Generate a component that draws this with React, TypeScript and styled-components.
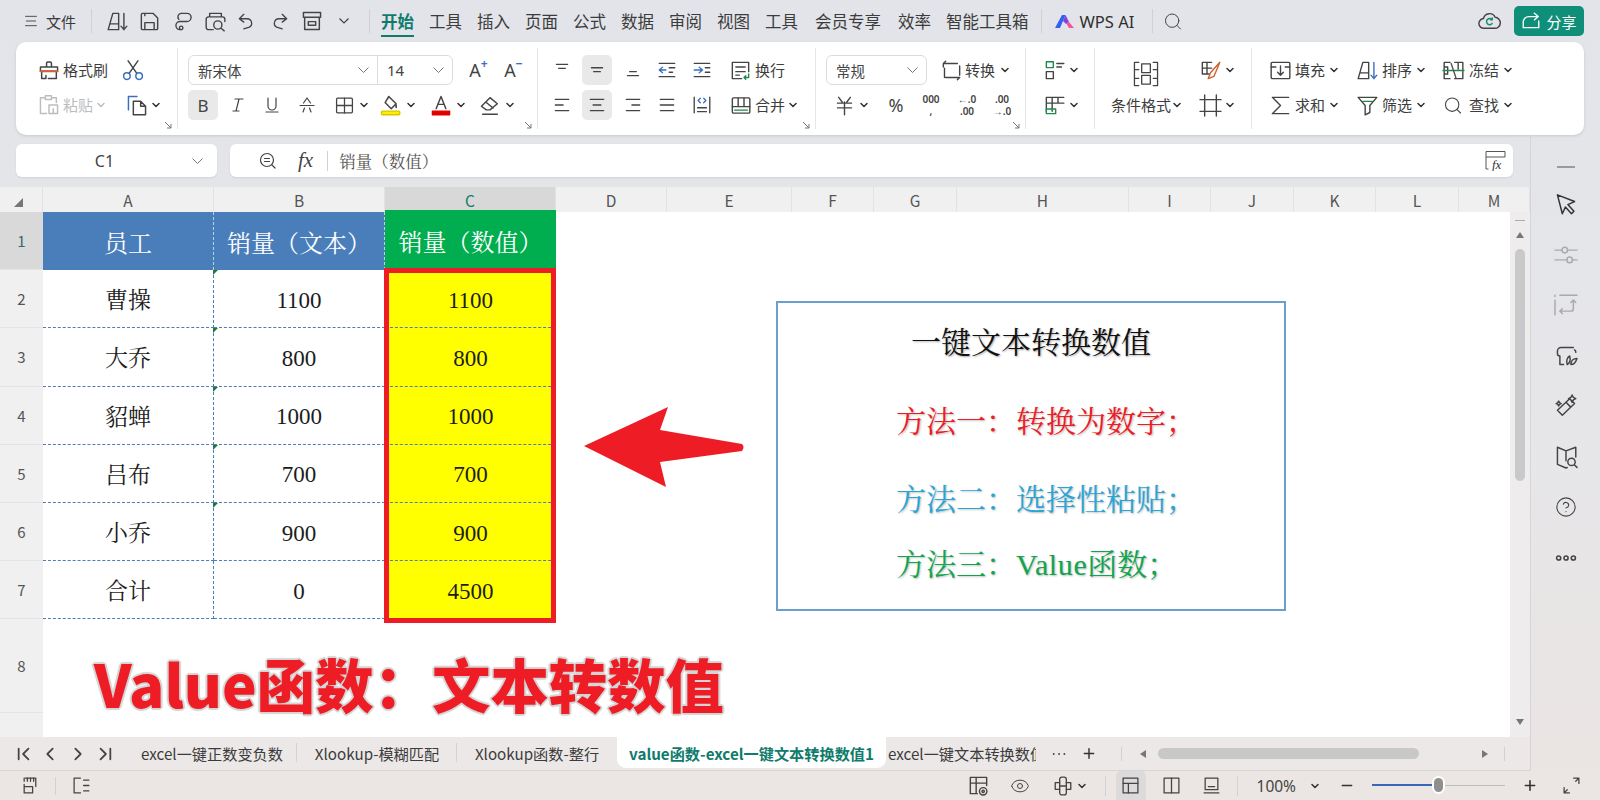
import React from "react";
import styled, { createGlobalStyle } from "styled-components";
import { Search, CircleHelp, Eye, Plus, Minus } from "lucide-react";

const GlobalStyle = createGlobalStyle`
  html, body { margin: 0; padding: 0; height: 100%; overflow: hidden; }
  body { font-family: "Noto Sans", "Noto Sans CJK SC", sans-serif; color: #333; }
`;

const UI_FONT = `"Noto Sans CJK SC", "Noto Sans", sans-serif`;
const SHEET_FONT = `"Liberation Serif", "Noto Serif CJK SC", "Noto Sans CJK SC", serif`;

const Ic = ({ s = 20, c = "#444", w = 1.2, children }: { s?: number; c?: string; w?: number; children: React.ReactNode }) => (
  <svg width={s} height={s} viewBox="1 1 18 18" overflow="visible" fill="none" stroke={c} strokeWidth={w} strokeLinecap="round" strokeLinejoin="round">
    {children}
  </svg>
);

const Chev = ({ c = "#333" }: { c?: string }) => (
  <svg width="8" height="8" viewBox="0 0 8 8" fill="none" stroke={c} strokeWidth="1.5" strokeLinecap="round" strokeLinejoin="round">
    <path d="M1 2.5l3 3 3-3" />
  </svg>
);

const SoftChev = () => (
  <svg width="13" height="8" viewBox="0 0 13 8" fill="none" stroke="#777" strokeWidth="1">
    <path d="M1.5 1.5l5 5 5-5" />
  </svg>
);

const Launcher = () => (
  <svg width="8" height="8" viewBox="0 0 8 8" fill="none" stroke="#777" strokeWidth="1">
    <path d="M1 1l6 6M7 3v4H3" />
  </svg>
);

const Page = styled.div`
  width: 1600px;
  height: 800px;
  display: flex;
  flex-direction: column;
  overflow: hidden;
  background: linear-gradient(180deg, #e2e4e9 0%, #e6e6e9 50%, #ebe5e3 100%);
  font-family: ${UI_FONT};
`;

const TopBar = styled.div`
  height: 42px;
  flex: none;
  display: flex;
  align-items: center;
  padding: 0 16px 0 25px;
`;

const Slot = styled.div<{ $w?: number; $ml?: number }>`
  flex: none;
  width: ${(p) => (p.$w ? `${p.$w}px` : "auto")};
  margin-left: ${(p) => p.$ml ?? 0}px;
  display: flex;
  align-items: center;
  justify-content: center;
`;

const Sep = styled.div<{ $ml?: number; $h?: number }>`
  flex: none;
  width: 1px;
  height: ${(p) => p.$h ?? 24}px;
  margin-left: ${(p) => p.$ml ?? 0}px;
  background: #cfd1d5;
`;

const MenuLabel = styled.span<{ $ml?: number }>`
  margin-left: ${(p) => p.$ml ?? 0}px;
  font-size: 15px;
  color: #3a3a3a;
  white-space: nowrap;
`;

const MenuTab = styled.div<{ $active?: boolean; $ml?: number }>`
  flex: none;
  position: relative;
  margin-left: ${(p) => p.$ml ?? 15}px;
  font-size: 16.5px;
  line-height: 24px;
  color: ${(p) => (p.$active ? "#0f7b6c" : "#3c3c3c")};
  font-weight: ${(p) => (p.$active ? 700 : 400)};
  white-space: nowrap;
  &::after {
    content: "";
    display: ${(p) => (p.$active ? "block" : "none")};
    position: absolute;
    left: 0;
    right: 0;
    bottom: -4px;
    height: 2px;
    background: #0f7b6c;
  }
`;

const AiLabel = styled.span`
  margin-left: 4px;
  font-family: "Noto Sans", sans-serif;
  font-size: 16.5px;
  color: #2f2f2f;
  white-space: nowrap;
`;

const ShareButton = styled.div`
  flex: none;
  width: 70px;
  height: 30px;
  margin-left: 15px;
  border-radius: 5px;
  background: #0f8f7a;
  color: #fff;
  font-size: 15px;
  display: flex;
  align-items: center;
  justify-content: center;
  gap: 5px;
`;

const Spacer = styled.div`
  flex: 1;
`;

const Ribbon = styled.div`
  flex: none;
  height: 93px;
  margin: 0 16px;
  display: flex;
  border-radius: 10px;
  background: #fff;
  box-shadow: 0 1px 3px rgba(0, 0, 0, 0.12);
`;

const Group = styled.div<{ $w?: number; $pl?: number; $last?: boolean }>`
  position: relative;
  flex: ${(p) => (p.$w ? "none" : "1")};
  width: ${(p) => (p.$w ? `${p.$w}px` : "auto")};
  height: 81px;
  margin-top: 6px;
  padding: 7px 0 0 ${(p) => p.$pl ?? 0}px;
  box-sizing: border-box;
  display: flex;
  flex-direction: column;
  gap: 5px;
  border-right: ${(p) => (p.$last ? "none" : "1px solid #e6e6e6")};
`;

const GroupCorner = styled.div`
  position: absolute;
  right: 5px;
  bottom: 0;
  display: flex;
`;

const Row = styled.div`
  height: 30px;
  display: flex;
  align-items: center;
`;

const Label = styled.span<{ $ml?: number; $dim?: boolean }>`
  flex: none;
  margin-left: ${(p) => p.$ml ?? 0}px;
  margin-top: -2px;
  font-size: 15px;
  color: ${(p) => (p.$dim ? "#bdbdbd" : "#3d3d3d")};
  white-space: nowrap;
`;

const Toggle = styled(Slot)<{ $on?: boolean }>`
  height: 30px;
  border-radius: 5px;
  background: ${(p) => (p.$on ? "#e9e9e9" : "transparent")};
`;

const ComboBox = styled.div<{ $w: number }>`
  flex: none;
  width: ${(p) => p.$w}px;
  height: 30px;
  box-sizing: border-box;
  border: 1px solid #dcdcdc;
  border-radius: 6px;
  display: flex;
  align-items: center;
`;

const ComboPart = styled.div<{ $w: number; $divide?: boolean }>`
  flex: none;
  width: ${(p) => p.$w}px;
  height: 100%;
  padding: 0 7px 0 9px;
  box-sizing: border-box;
  display: flex;
  align-items: center;
  justify-content: space-between;
  font-size: 14.5px;
  color: #444;
  border-right: ${(p) => (p.$divide ? "1px solid #dcdcdc" : "none")};
`;

const Glyph = styled.span<{ $size?: number; $weight?: number }>`
  position: relative;
  font-family: "Noto Sans", sans-serif;
  font-size: ${(p) => p.$size ?? 18}px;
  font-weight: ${(p) => p.$weight ?? 400};
  color: #444;
  line-height: 1;
`;

const GlyphMark = styled.sup<{ $c: string }>`
  position: absolute;
  left: 100%;
  top: -3px;
  font-size: 12px;
  line-height: 1;
  font-weight: 700;
  color: ${(p) => p.$c};
`;

const NumberStack = styled.div`
  display: flex;
  flex-direction: column;
  align-items: center;
  font-family: "Noto Sans", sans-serif;
  font-size: 10px;
  font-weight: 600;
  line-height: 12px;
  color: #444;
`;

const BigCondition = styled.div`
  flex: none;
  width: 105px;
  padding-right: 3px;
  box-sizing: border-box;
  display: flex;
  flex-direction: column;
  align-items: center;
`;

const BigIconBox = styled.div`
  height: 32px;
  display: flex;
  align-items: flex-end;
`;

const BigLabelRow = styled.div`
  margin-top: 3px;
  height: 30px;
  display: flex;
  align-items: center;
  gap: 2px;
`;

const SplitGroup = styled.div`
  display: flex;
  height: 100%;
`;

const Column = styled.div`
  display: flex;
  flex-direction: column;
  gap: 5px;
`;

const Main = styled.div`
  flex: 1;
  min-height: 0;
  display: flex;
`;

const LeftPane = styled.div`
  width: 1530px;
  flex: none;
  display: flex;
  flex-direction: column;
`;

const FormulaRow = styled.div`
  flex: none;
  height: 33px;
  margin: 9px 17px 10px 16px;
  display: flex;
  gap: 13px;
`;

const NameBox = styled.div`
  flex: none;
  width: 201px;
  box-sizing: border-box;
  padding: 0 13px 0 0;
  background: #fff;
  border-radius: 6px;
  box-shadow: 0 1px 2px rgba(0, 0, 0, 0.08);
  display: flex;
  align-items: center;
`;

const NameText = styled.span`
  flex: 1;
  text-align: center;
  padding-left: 2px;
  font-family: "Noto Sans", sans-serif;
  font-size: 16px;
  color: #444;
`;

const FormulaBox = styled.div`
  flex: 1;
  background: #fff;
  border-radius: 6px;
  box-shadow: 0 1px 2px rgba(0, 0, 0, 0.08);
  display: flex;
  align-items: center;
  padding: 0 7px 0 29px;
`;

const FxText = styled.span`
  margin-left: 21px;
  font-family: "Liberation Serif", serif;
  font-style: italic;
  font-size: 21px;
  color: #444;
`;

const FormulaText = styled.span`
  margin-left: 11px;
  font-family: ${SHEET_FONT};
  font-size: 16.5px;
  color: #555;
`;

const FxCorner = styled.text`
  font-family: "Liberation Serif", serif;
  font-style: italic;
  font-size: 13px;
  fill: #333;
`;

const Sheet = styled.div`
  position: relative;
  flex: 1;
  min-height: 0;
  display: flex;
  flex-direction: column;
`;

const ColumnHeader = styled.div`
  flex: none;
  height: 25px;
  display: flex;
  background: #f0f0f0;
`;

const ColCell = styled.div<{ $w: number; $on?: boolean }>`
  flex: none;
  width: ${(p) => p.$w}px;
  box-sizing: border-box;
  display: flex;
  align-items: center;
  justify-content: center;
  font-size: 15.5px;
  color: ${(p) => (p.$on ? "#0f7b6c" : "#555")};
  background: ${(p) => (p.$on ? "#d8d8d8" : "#f0f0f0")};
  border-right: 1px solid #e2e2e2;
`;

const CornerMark = styled.i`
  width: 0;
  height: 0;
  margin: 6px 0 0 -6px;
  border-left: 9px solid transparent;
  border-bottom: 9px solid #777;
`;

const SheetBody = styled.div`
  flex: 1;
  min-height: 0;
  display: flex;
`;

const RowHeader = styled.div`
  flex: none;
  width: 43px;
  display: flex;
  flex-direction: column;
  background: #f0f0f0;
`;

const RowCell = styled.div<{ $h: number; $on?: boolean }>`
  flex: none;
  height: ${(p) => p.$h}px;
  box-sizing: border-box;
  display: flex;
  align-items: center;
  justify-content: center;
  font-size: 15px;
  color: ${(p) => (p.$on ? "#2f6f68" : "#555")};
  background: ${(p) => (p.$on ? "#d9d9d9" : "#f0f0f0")};
  border-bottom: 1px solid #e4e4e4;
`;

const GridWrap = styled.div`
  flex: 1;
  min-width: 0;
  background: #fff;
`;

const DataGrid = styled.div`
  position: relative;
  display: grid;
  grid-template-columns: 171px 171px 171px;
  grid-auto-rows: 58.2px;
  width: 513px;
  font-family: ${SHEET_FONT};
  font-size: 23px;
`;

const HeadCell = styled.div<{ $green?: boolean }>`
  display: flex;
  align-items: center;
  justify-content: center;
  font-size: 24px;
  color: #fff;
  white-space: nowrap;
  background: ${(p) => (p.$green ? "#00ad4f" : "#4a7ebb")};
  border-right: ${(p) => (p.$green ? "none" : "1px dashed #b9d2ea")};
  ${(p) => (p.$green ? "margin-top: -2px;" : "")}
`;

const DataCell = styled.div<{ $fill?: boolean; $flag?: boolean; $num?: boolean }>`
  position: relative;
  display: flex;
  align-items: center;
  justify-content: center;
  padding-top: ${(p) => (p.$num ? 4 : 0)}px;
  color: #1c1c1c;
  background: ${(p) => (p.$fill ? "#ffff00" : "#fff")};
  border-bottom: 1px dashed #4a7ebb;
  border-right: ${(p) => (p.$fill ? "none" : "1px dashed #4a7ebb")};
  &::before {
    content: "";
    display: ${(p) => (p.$flag ? "block" : "none")};
    position: absolute;
    left: -1px;
    top: 0;
    border-top: 5px solid #1f7a3a;
    border-right: 5px solid transparent;
  }
`;

const RedFrame = styled.div`
  position: absolute;
  grid-column: 3;
  grid-row: 2 / 8;
  inset: -2px 0 -4px -1px;
  border: 5px solid #ee1c25;
  pointer-events: none;
`;

const ArrowOverlay = styled.div`
  position: absolute;
  left: 583px;
  top: 219px;
  display: flex;
`;

const NoteBox = styled.div`
  position: absolute;
  left: 776px;
  top: 114px;
  width: 510px;
  height: 310px;
  box-sizing: border-box;
  border: 2px solid #6a9fd0;
  background: #fff;
  padding: 20px 0 0 118px;
  font-family: ${SHEET_FONT};
  display: flex;
  flex-direction: column;
`;

const NoteTitle = styled.div`
  margin-left: -118px;
  text-align: center;
  font-size: 30px;
  line-height: 40px;
  color: #111;
  text-shadow: 1px 1px 2px rgba(0, 0, 0, 0.35);
`;

const NoteLine = styled.div<{ $c: string; $mt: number }>`
  margin-top: ${(p) => p.$mt}px;
  font-size: 30px;
  line-height: 40px;
  color: ${(p) => p.$c};
  white-space: nowrap;
  text-shadow: 1px 1px 2px rgba(0, 0, 0, 0.28);
`;

const WideLatin = styled.span`
  letter-spacing: 0.6px;
`;

const Banner = styled.div`
  position: absolute;
  left: 94px;
  top: 461px;
  font-family: "Noto Sans CJK SC", "Noto Sans", sans-serif;
  font-size: 58.4px;
  font-weight: 900;
  line-height: 70px;
  color: #ee1c25;
  white-space: nowrap;
  text-shadow: 2px 0 1px #d4d4d4, -2px 0 1px #d4d4d4, 0 2px 1px #d4d4d4, 0 -2px 1px #d4d4d4, 1px 1px 1px #d4d4d4,
    -1px -1px 1px #d4d4d4, 1px -1px 1px #d4d4d4, -1px 1px 1px #d4d4d4;
`;

const VScroll = styled.div`
  position: absolute;
  right: 0;
  top: 25px;
  bottom: 0;
  width: 20px;
  background: #eeecec;
  display: flex;
  flex-direction: column;
  align-items: center;
`;

const ScrollDash = styled.div`
  width: 10px;
  height: 1px;
  margin-top: 8px;
  background: #aaa;
`;

const ScrollUp = styled.i`
  margin-top: 11px;
  border-left: 4px solid transparent;
  border-right: 4px solid transparent;
  border-bottom: 6px solid #777;
`;

const ScrollThumb = styled.div`
  margin-top: 11px;
  width: 10px;
  height: 232px;
  border-radius: 5px;
  background: #c9c9cb;
`;

const ScrollDown = styled.i`
  margin-top: auto;
  margin-bottom: 12px;
  border-left: 4px solid transparent;
  border-right: 4px solid transparent;
  border-top: 6px solid #777;
`;

const TabBar = styled.div`
  flex: none;
  height: 34px;
  box-sizing: border-box;
  display: flex;
  align-items: flex-start;
  background: #ebe8e7;
  border-bottom: 1px solid #d8d6d5;
`;

const TabStrip = styled.div`
  flex: none;
  height: 33px;
  display: flex;
  align-items: center;
`;

const SheetTab = styled.div<{ $w: number; $on?: boolean; $sep?: boolean; $ml?: number }>`
  flex: none;
  position: relative;
  width: ${(p) => p.$w}px;
  height: 31px;
  margin-left: ${(p) => p.$ml ?? 0}px;
  align-self: flex-start;
  overflow: hidden;
  display: flex;
  align-items: center;
  justify-content: center;
  font-size: 15.2px;
  font-weight: ${(p) => (p.$on ? 700 : 400)};
  color: ${(p) => (p.$on ? "#0f7b6c" : "#3c3c3c")};
  background: ${(p) => (p.$on ? "#fff" : "transparent")};
  border-radius: 0 0 9px 9px;
  white-space: nowrap;
  &::after {
    content: "";
    display: ${(p) => (p.$sep ? "block" : "none")};
    position: absolute;
    right: 0;
    top: 6px;
    height: 20px;
    width: 1px;
    background: #d4d2d1;
  }
`;

const ClipTab = styled(SheetTab)`
  justify-content: flex-start;
  padding-left: 2px;
  box-sizing: border-box;
`;

const HThumb = styled.div`
  flex: none;
  width: 261px;
  height: 11px;
  margin-left: 11px;
  border-radius: 6px;
  background: #c9c8c8;
`;

const StatusBar = styled.div`
  flex: none;
  height: 29px;
  display: flex;
  align-items: center;
  padding: 0 19px 0 21px;
  background: #ebe5e3;
`;

const ViewToggle = styled(Slot)`
  height: 29px;
  border-radius: 5px 5px 0 0;
  background: #dcdada;
`;

const ZoomText = styled.span<{ $ml: number }>`
  flex: none;
  margin-left: ${(p) => p.$ml}px;
  font-family: "Noto Sans", sans-serif;
  font-size: 15.5px;
  color: #444;
`;

const Slider = styled.div`
  position: relative;
  flex: none;
  width: 133px;
  height: 1px;
  margin-left: 17px;
  background: #bdbdbd;
`;

const SliderFill = styled.div`
  position: absolute;
  left: 0;
  top: -1px;
  height: 2px;
  background: #3a68b8;
`;

const SliderKnob = styled.div`
  position: absolute;
  top: -7px;
  width: 9px;
  height: 14px;
  border-radius: 5px;
  background: #8f8f8f;
  box-shadow: 0 0 0 2px #fff;
`;

const SidePanel = styled.div`
  flex: none;
  width: 70px;
  box-sizing: border-box;
  padding-top: 31px;
  border-left: 1px solid #d5d5d7;
  display: flex;
  flex-direction: column;
  align-items: center;
`;

const SideDash = styled.div`
  width: 18px;
  height: 2px;
  margin-bottom: 25px;
  background: #9a9a9a;
`;

const SideItem = styled.div`
  height: 22px;
  margin-bottom: 28.5px;
  display: flex;
  align-items: center;
  justify-content: center;
`;

const columns: [string, number][] = [
  ["A", 171], ["B", 171], ["C", 171], ["D", 111], ["E", 125], ["F", 82], ["G", 83],
  ["H", 172], ["I", 82], ["J", 83], ["K", 82], ["L", 83], ["M", 71],
];

const rowsData: [string, string, string][] = [
  ["曹操", "1100", "1100"],
  ["大乔", "800", "800"],
  ["貂蝉", "1000", "1000"],
  ["吕布", "700", "700"],
  ["小乔", "900", "900"],
  ["合计", "0", "4500"],
];

const rowHeights = [58.2, 58.2, 58.2, 58.2, 58.2, 58.2, 58.2, 94];

function RibbonBar() {
  return (
    <Ribbon>
      <Group $w={162} $pl={22}>
        <Row>
          <Slot $w={22}>
            <Ic s={22}>
              <path d="M8 7V4.5a1 1 0 0 1 1-1h2a1 1 0 0 1 1 1V7M3 7.5h14V11H3zM4 11v6h3.5v-2.5M9.5 17H16v-6" />
              <path d="M3 11h14" stroke="#c8663a" strokeWidth="1.6" />
            </Ic>
          </Slot>
          <Label $ml={3}>格式刷</Label>
          <Slot $w={20} $ml={15}>
            <Ic s={22}>
              <path d="M7 12.5L14 2.5M13 12.5L6 2.5" />
              <circle cx="5" cy="15" r="2.7" stroke="#3a6fc0" />
              <circle cx="15" cy="15" r="2.7" stroke="#3a6fc0" />
            </Ic>
          </Slot>
        </Row>
        <Row>
          <Slot $w={22}>
            <Ic s={22} c="#bdbdbd">
              <path d="M6 4H3v13h5M13 4h3v4M7 2.5h5v3H7zM10 10h7v7h-7zM13.5 13v4" />
            </Ic>
          </Slot>
          <Label $ml={3} $dim>粘贴</Label>
          <Slot $w={8} $ml={4}><Chev c="#bdbdbd" /></Slot>
          <Slot $w={22} $ml={21}>
            <Ic s={22}>
              <path d="M3 14V3h7" stroke="#3a6fc0" />
              <path d="M7 7h6l4 4v7H7zM13 7v4h4" />
            </Ic>
          </Slot>
          <Slot $w={8} $ml={4}><Chev /></Slot>
        </Row>
        <GroupCorner><Launcher /></GroupCorner>
      </Group>

      <Group $w={360} $pl={10}>
        <Row>
          <ComboBox $w={265}>
            <ComboPart $w={189} $divide>新宋体<SoftChev /></ComboPart>
            <ComboPart $w={74}><Glyph $size={15}>14</Glyph><SoftChev /></ComboPart>
          </ComboBox>
          <Slot $w={24} $ml={10}><Glyph>A<GlyphMark $c="#3a6fc0">+</GlyphMark></Glyph></Slot>
          <Slot $w={24} $ml={11}><Glyph>A<GlyphMark $c="#3a6fc0">−</GlyphMark></Glyph></Slot>
        </Row>
        <Row>
          <Toggle $w={30} $on><Glyph $size={17}>B</Glyph></Toggle>
          <Slot $w={40}>
            <Ic s={18}><path d="M7 4h8M11 4L8 16M5 16h6" /></Ic>
          </Slot>
          <Slot $w={28}>
            <Ic s={18}><path d="M6 3v8a4 4 0 0 0 8 0V3M4 17h12" /></Ic>
          </Slot>
          <Slot $w={42}>
            <Ic s={18}><path d="M6.5 8L10 3l3.500 5M3 10.500h14M6 17l1.500-4M14 17l-1.500-4" /></Ic>
          </Slot>
          <Slot $w={24} $ml={4}>
            <Ic s={19}><rect x="2.500" y="3" width="15" height="14" rx="1" /><path d="M2.500 10h15M10 3v14" /></Ic>
          </Slot>
          <Slot $w={8} $ml={4}><Chev /></Slot>
          <Slot $w={24} $ml={10}>
            <Ic s={22}>
              <path d="M9 3l6 6-4 4-5-5zM8 5l1-2" />
              <path d="M15 10v2" stroke="#333" />
              <rect x="3" y="15" width="15" height="3" rx="1" fill="#ffee00" stroke="#d8c700" />
            </Ic>
          </Slot>
          <Slot $w={8} $ml={5}><Chev /></Slot>
          <Slot $w={24} $ml={14}>
            <Ic s={22}>
              <path d="M6 13L10 3l4 10M7.500 9.500h5" />
              <rect x="3" y="15" width="14" height="3" fill="#e00000" stroke="#e00000" />
            </Ic>
          </Slot>
          <Slot $w={8} $ml={4}><Chev /></Slot>
          <Slot $w={24} $ml={13}>
            <Ic s={22}>
              <path d="M3 11l7-7 6 5-6 5H7zM6.500 7.500l6 5M4 17.500h12" />
            </Ic>
          </Slot>
          <Slot $w={8} $ml={4}><Chev /></Slot>
        </Row>
        <GroupCorner><Launcher /></GroupCorner>
      </Group>

      <Group $w={278} $pl={9}>
        <Row>
          <Slot $w={30}><Ic><path d="M5 5h10M7 8.500h6" /></Ic></Slot>
          <Toggle $w={30} $ml={5} $on><Ic><path d="M5 8h10M7 11.500h6" /></Ic></Toggle>
          <Slot $w={30} $ml={6}><Ic><path d="M7 11.500h6M5 15h10" /></Ic></Slot>
          <Slot $w={30} $ml={4}>
            <Ic><path d="M3 4h14M3 16h14M12 8h5M12 12h3" /><path d="M9 10H3M6 7.500L3 10l3 2.500" stroke="#3a6fc0" /></Ic>
          </Slot>
          <Slot $w={30} $ml={5}>
            <Ic><path d="M3 4h14M3 16h14M13 8h4M13 12h4" /><path d="M3 10h7M7.500 7.500L10.500 10l-3 2.500" stroke="#3a6fc0" /></Ic>
          </Slot>
          <Slot $w={20} $ml={13}>
            <Ic s={21}>
              <path d="M17 11V3H3v14h8M6 7h8M6 11h8M6 14h3" />
              <path d="M17 13v3h-4M14.500 14.500L13 16l1.500 1.500" stroke="#1f8a4c" />
            </Ic>
          </Slot>
          <Label $ml={5}>换行</Label>
        </Row>
        <Row>
          <Slot $w={30}><Ic><path d="M4 5h12M4 10h7M4 15h12" /></Ic></Slot>
          <Toggle $w={30} $ml={5} $on><Ic><path d="M4 5h12M6.500 10h7M4 15h12" /></Ic></Toggle>
          <Slot $w={30} $ml={6}><Ic><path d="M4 5h12M9 10h7M4 15h12" /></Ic></Slot>
          <Slot $w={30} $ml={4}><Ic><path d="M4 5h12M4 10h12M4 15h12" /></Ic></Slot>
          <Slot $w={30} $ml={5}>
            <Ic>
              <path d="M3 3v14M17 3v14M6 12.500h8M6 16h8" />
              <path d="M8.500 4L6.500 6l2 2M11.500 4l2 2-2 2" stroke="#3a6fc0" />
            </Ic>
          </Slot>
          <Slot $w={20} $ml={13}>
            <Ic s={21}>
              <rect x="3" y="3.500" width="15" height="13" rx="1" />
              <path d="M3 11h15M8 3.500V11M13 3.500V11" />
              <path d="M5 14h11" stroke="#1f8a4c" />
            </Ic>
          </Slot>
          <Label $ml={5}>合并</Label>
          <Slot $w={8} $ml={4}><Chev /></Slot>
        </Row>
        <GroupCorner><Launcher /></GroupCorner>
      </Group>

      <Group $w={210} $pl={10}>
        <Row>
          <ComboBox $w={101}>
            <ComboPart $w={99}>常规<SoftChev /></ComboPart>
          </ComboBox>
          <Slot $w={20} $ml={14}>
            <Ic s={21}>
              <path d="M3 7V4h12M5 2L3 4M4 8v8M17 6v8M17 16H5M15 18l2-2" />
            </Ic>
          </Slot>
          <Label $ml={4}>转换</Label>
          <Slot $w={8} $ml={6}><Chev /></Slot>
        </Row>
        <Row>
          <Slot $w={24} $ml={6}>
            <Ic s={21}><path d="M5 3l3 4M15 3l-3 4M4 8h12M4 12h12M10 7v11" /></Ic>
          </Slot>
          <Slot $w={8} $ml={4}><Chev /></Slot>
          <Slot $w={24} $ml={16}><Glyph>%</Glyph></Slot>
          <Slot $w={26} $ml={10}><NumberStack>000<span>,</span></NumberStack></Slot>
          <Slot $w={26} $ml={10}><NumberStack><span>←.0</span><span>.00</span></NumberStack></Slot>
          <Slot $w={26} $ml={9}><NumberStack><span>.00</span><span>→.0</span></NumberStack></Slot>
        </Row>
        <GroupCorner><Launcher /></GroupCorner>
      </Group>

      <Group $w={69} $pl={18}>
        <Row>
          <Slot $w={20}>
            <Ic s={21}>
              <rect x="3" y="2.500" width="6" height="5" stroke="#1f8a4c" />
              <rect x="3" y="11" width="6" height="6" />
              <path d="M12 4h6M12 7h4" />
            </Ic>
          </Slot>
          <Slot $w={8} $ml={6}><Chev /></Slot>
        </Row>
        <Row>
          <Slot $w={20}>
            <Ic s={21}>
              <path d="M3 3h15M3 3v12M3 8h15M8 3v12M13 3v5" />
              <rect x="3" y="13" width="8" height="4" stroke="#1f8a4c" />
            </Ic>
          </Slot>
          <Slot $w={8} $ml={6}><Chev /></Slot>
        </Row>
      </Group>

      <Group $w={157}>
        <SplitGroup>
          <BigCondition>
            <BigIconBox>
              <Ic s={26} w={0.9}>
                <path d="M5 2H2v16h3M15 2h3v16h-3M2 7h3M2 13h3M15 7h3M15 13h3M7 3h6v6H7zM7 11h6v6H7z" />
              </Ic>
            </BigIconBox>
            <BigLabelRow>
              <Label>条件格式</Label>
              <Chev />
            </BigLabelRow>
          </BigCondition>
          <Column>
            <Row>
              <Slot $w={20}>
                <Ic s={21}>
                  <path d="M11 3H3v10h6M3 8h8M7 3v10" />
                  <path d="M18 3l-8 9-2 5 5-2 5-12z" stroke="#d0622a" />
                </Ic>
              </Slot>
              <Slot $w={8} $ml={6}><Chev /></Slot>
            </Row>
            <Row>
              <Slot $w={20}>
                <Ic s={21}><path d="M1 5h18M1 15h18M5 1v18M15 1v18" /></Ic>
              </Slot>
              <Slot $w={8} $ml={6}><Chev /></Slot>
            </Row>
          </Column>
        </SplitGroup>
      </Group>

      <Group $pl={18} $last>
        <Row>
          <Slot $w={20}>
            <Ic s={21}><rect x="2" y="3" width="16" height="14" rx="1" /><path d="M2 7h4M14 7h4M10 6v8M7.500 11.500L10 14l2.500-2.500" /></Ic>
          </Slot>
          <Label $ml={5}>填充</Label>
          <Slot $w={8} $ml={5}><Chev /></Slot>
          <Slot $w={20} $ml={19}>
            <Ic s={21}>
              <path d="M2 17L6 3h5v14H2zM4 12h7" />
              <path d="M15.500 3v14M13 14l2.500 3 2.500-3" stroke="#3a6fc0" />
            </Ic>
          </Slot>
          <Label $ml={5}>排序</Label>
          <Slot $w={8} $ml={5}><Chev /></Slot>
          <Slot $w={20} $ml={18}>
            <Ic s={21}>
              <path d="M7 3H2v14h5M11 3h7v14h-7M2 7h3M2 13h3M5 7v6M14 3v6" />
              <path d="M1 10h18" stroke="#1f8a4c" />
              <path d="M8 4l4 12" stroke="#555" />
            </Ic>
          </Slot>
          <Label $ml={6}>冻结</Label>
          <Slot $w={8} $ml={5}><Chev /></Slot>
        </Row>
        <Row>
          <Slot $w={20}>
            <Ic s={21}><path d="M17 3H3l7 7-7 7h14" /></Ic>
          </Slot>
          <Label $ml={5}>求和</Label>
          <Slot $w={8} $ml={5}><Chev /></Slot>
          <Slot $w={20} $ml={19}>
            <Ic s={21}>
              <path d="M2 3h16l-6 7v6l-4 2v-8z" />
              <path d="M6 6.500h8" stroke="#1f8a4c" />
            </Ic>
          </Slot>
          <Label $ml={5}>筛选</Label>
          <Slot $w={8} $ml={5}><Chev /></Slot>
          <Slot $w={20} $ml={18}><Search size={21} strokeWidth={1.3} color="#444" /></Slot>
          <Label $ml={6}>查找</Label>
          <Slot $w={8} $ml={5}><Chev /></Slot>
        </Row>
      </Group>
    </Ribbon>
  );
}

function MenuBar() {
  const tabs = ["工具", "插入", "页面", "公式", "数据", "审阅", "视图", "工具"];
  return (
    <TopBar>
      <Slot $w={12}>
        <Ic s={14}><path d="M3 4h14M4 10h12M3 16h14" /></Ic>
      </Slot>
      <MenuLabel $ml={9}>文件</MenuLabel>
      <Sep $ml={15} />
      <Slot $w={20} $ml={15}>
        <Ic s={21}><path d="M2 17L6 3h5v14H2zM4 12h7" /><path d="M15.500 3v14M13 14l2.500 3 2.500-3" /></Ic>
      </Slot>
      <Slot $w={20} $ml={12}>
        <Ic s={21}><path d="M3 4a1 1 0 0 1 1-1h9l4 4v9a1 1 0 0 1-1 1H4a1 1 0 0 1-1-1zM6 17v-6h8v6M6 3v2" /></Ic>
      </Slot>
      <Slot $w={20} $ml={14}>
        <Ic s={21}><path d="M8 3h5a3.500 3.500 0 0 1 0 7H7a3.500 3.500 0 0 0 0 7h1" /><path d="M8 3a3 3 0 0 0-2 5" /><circle cx="8" cy="15.500" r="1.500" /></Ic>
      </Slot>
      <Slot $w={20} $ml={12}>
        <Ic s={21}><path d="M5 6V3h10v3M8 17H4a2 2 0 0 1-2-2V8a2 2 0 0 1 2-2h12a2 2 0 0 1 2 2v2" /><circle cx="12" cy="13" r="3.500" /><path d="M15 16l2.500 2" /></Ic>
      </Slot>
      <Slot $w={20} $ml={11}>
        <Ic s={20}><path d="M8 4L4 8l4 3M4 8h7a4 4 0 0 1 2 7.500L8 17" /></Ic>
      </Slot>
      <Slot $w={20} $ml={14}>
        <Ic s={20}><path d="M12 4l4 4-4 3M16 8H9a4 4 0 0 0-2 7.500L12 17" /></Ic>
      </Slot>
      <Slot $w={22} $ml={11}>
        <Ic s={22}><path d="M3 3h14v4H3zM4 7v10h12V7M7 10.500h6v3H7z" /></Ic>
      </Slot>
      <Slot $w={12} $ml={15}>
        <svg width="12" height="8" viewBox="0 0 12 8" fill="none" stroke="#444" strokeWidth="1.2"><path d="M1.500 1.500L6 6l4.500-4.500" /></svg>
      </Slot>
      <Sep $ml={19} />
      <MenuTab $active $ml={11}>开始</MenuTab>
      {tabs.map((t, i) => (
        <MenuTab key={i}>{t}</MenuTab>
      ))}
      <MenuTab $ml={17}>会员专享</MenuTab>
      <MenuTab $ml={17}>效率</MenuTab>
      <MenuTab>智能工具箱</MenuTab>
      <Sep $ml={12} />
      <Slot $w={22} $ml={12}>
        <svg width="20" height="15" viewBox="0 0 20 15">
          <path d="M0 14L7 1h3.500L8 7 5 14z" fill="#2f62f2" />
          <path d="M8 7l2.500-6L14 8l-3 2z" fill="#7b45e6" />
          <path d="M11 9l3-1 5 6h-5z" fill="#f2559b" />
        </svg>
      </Slot>
      <AiLabel>WPS AI</AiLabel>
      <Sep $ml={18} />
      <Slot $w={20} $ml={10}>
        <Search size={21} strokeWidth={1.2} color="#444" />
      </Slot>
      <Spacer />
      <Slot $w={20}>
        <Ic s={22}>
          <path d="M6 16a4 4 0 0 1-.5-8A5 5 0 0 1 15 7a4.500 4.500 0 0 1-.5 9z" />
          <path d="M12.500 9a2.500 2.500 0 1 0 0 3M12.700 7.500V9h-1.500" stroke="#1f8a6c" />
        </Ic>
      </Slot>
      <ShareButton>
        <Ic s={20} c="#fff"><path d="M17 10v6H3v-5a5 5 0 0 1 5-5h8M13 3l3.500 3L13 9" /></Ic>
        分享
      </ShareButton>
    </TopBar>
  );
}

function FormulaBar() {
  return (
    <FormulaRow>
      <NameBox>
        <NameText>C1</NameText>
        <SoftChev />
      </NameBox>
      <FormulaBox>
        <Ic s={18}><circle cx="9" cy="9" r="6.500" /><path d="M6.500 7.500h5M6.500 10.500h5M14 14l3 3" /></Ic>
        <FxText>fx</FxText>
        <Sep $ml={14} $h={20} />
        <FormulaText>销量（数值）</FormulaText>
        <Spacer />
        <svg width="21" height="21" viewBox="0 0 21 21" fill="none" stroke="#555" strokeWidth="1">
          <path d="M1 7V1.500h19V7H1M1 7v12h2.500" />
          <FxCorner x="7" y="19" stroke="none">fx</FxCorner>
        </svg>
      </FormulaBox>
    </FormulaRow>
  );
}

function SheetArea() {
  return (
    <Sheet>
      <ColumnHeader>
        <ColCell $w={43}><CornerMark /></ColCell>
        {columns.map(([name, w]) => (
          <ColCell key={name} $w={w} $on={name === "C"}>{name}</ColCell>
        ))}
      </ColumnHeader>
      <SheetBody>
        <RowHeader>
          {rowHeights.map((h, i) => (
            <RowCell key={i} $h={h} $on={i === 0}>{i + 1}</RowCell>
          ))}
        </RowHeader>
        <GridWrap>
          <DataGrid>
            <HeadCell>员工</HeadCell>
            <HeadCell>销量（文本）</HeadCell>
            <HeadCell $green>销量（数值）</HeadCell>
            {rowsData.map((r, i) => (
              <React.Fragment key={r[0]}>
                <DataCell>{r[0]}</DataCell>
                <DataCell $num $flag={i < 5}>{r[1]}</DataCell>
                <DataCell $num $fill>{r[2]}</DataCell>
              </React.Fragment>
            ))}
            <RedFrame />
          </DataGrid>
        </GridWrap>
      </SheetBody>

      <ArrowOverlay>
        <svg width="162" height="82" viewBox="0 0 162 82">
          <path d="M1 40L85 1 77 24 159 38Q162 41 159 45L77 56 83 81z" fill="#ee1c25" />
        </svg>
      </ArrowOverlay>

      <NoteBox>
        <NoteTitle>一键文本转换数值</NoteTitle>
        <NoteLine $c="#ee1c25" $mt={39}>方法一：转换为数字；</NoteLine>
        <NoteLine $c="#2aa5d8" $mt={38}>方法二：选择性粘贴；</NoteLine>
        <NoteLine $c="#12a550" $mt={25}>方法三：<WideLatin>Value</WideLatin>函数；</NoteLine>
      </NoteBox>

      <Banner>Value函数：文本转数值</Banner>

      <VScroll>
        <ScrollDash />
        <ScrollUp />
        <ScrollThumb />
        <ScrollDown />
      </VScroll>
    </Sheet>
  );
}

function TabsRow() {
  return (
    <TabBar>
      <TabStrip>
        <Slot $w={12} $ml={18}>
          <Ic s={16} w={2}><path d="M4 4v12M15 4l-6 6 6 6" /></Ic>
        </Slot>
        <Slot $w={12} $ml={14}>
          <Ic s={16} w={2}><path d="M13 4l-6 6 6 6" /></Ic>
        </Slot>
        <Slot $w={12} $ml={16}>
          <Ic s={16} w={2}><path d="M7 4l6 6-6 6" /></Ic>
        </Slot>
        <Slot $w={12} $ml={15}>
          <Ic s={16} w={2}><path d="M16 4v12M5 4l6 6-6 6" /></Ic>
        </Slot>
      </TabStrip>
      <SheetTab $w={170} $ml={16} $sep>excel一键正数变负数</SheetTab>
      <SheetTab $w={160} $sep>Xlookup-模糊匹配</SheetTab>
      <SheetTab $w={160}>Xlookup函数-整行</SheetTab>
      <SheetTab $w={269} $on>value函数-excel一键文本转换数值1</SheetTab>
      <ClipTab $w={150}>excel一键文本转换数值1</ClipTab>
      <TabStrip>
        <Slot $w={16} $ml={15}>
          <Ic s={16} w={2}><path d="M4 10h.1M10 10h.1M16 10h.1" /></Ic>
        </Slot>
        <Slot $w={16} $ml={14}><Plus size={17} strokeWidth={2.2} color="#333" /></Slot>
        <Sep $ml={24} $h={14} />
        <Slot $w={8} $ml={17}>
          <svg width="6" height="8" viewBox="0 0 6 8"><path d="M6 0v8L0 4z" fill="#777" /></svg>
        </Slot>
        <HThumb />
        <Slot $w={8} $ml={62}>
          <svg width="6" height="8" viewBox="0 0 6 8"><path d="M0 0v8l6-4z" fill="#777" /></svg>
        </Slot>
        <Sep $ml={15} $h={14} />
      </TabStrip>
    </TabBar>
  );
}

function BottomBar() {
  return (
    <StatusBar>
      <Slot $w={18}>
        <Ic s={19}><path d="M5 3h10M15 3v8M4 9v8h8v-6H4" /><path d="M4 3v3M7 3v3M10 3v3M13 3v3" /></Ic>
      </Slot>
      <Sep $ml={16} $h={18} />
      <Slot $w={20} $ml={15}>
        <Ic s={19}><path d="M9 3H3v14h6M12 5h5M12 10h5M12 15h5" /></Ic>
      </Slot>
      <Spacer />
      <Slot $w={20}>
        <Ic s={21}>
          <path d="M9 17H3V3h14v7M3 8h14M8 3v14" />
          <circle cx="14" cy="15" r="3.200" /><circle cx="14" cy="15" r="1" />
        </Ic>
      </Slot>
      <Slot $w={20} $ml={21}>
        <Eye size={20} strokeWidth={1.2} color="#444" />
      </Slot>
      <Slot $w={20} $ml={23}>
        <Ic s={20}><rect x="7" y="2" width="6" height="16" rx="2" /><path d="M7 7H3v6h4M13 7h4v6h-4M7 10h6" /></Ic>
      </Slot>
      <Slot $w={8} $ml={5}><Chev /></Slot>
      <Sep $ml={19} $h={20} />
      <ViewToggle $w={30} $ml={10}>
        <Ic s={19}><rect x="3" y="3" width="14" height="14" /><path d="M3 8h14M8 8v9" /></Ic>
      </ViewToggle>
      <Slot $w={20} $ml={16}>
        <Ic s={19}><rect x="3" y="3" width="14" height="14" /><path d="M10 3v14" /></Ic>
      </Slot>
      <Slot $w={20} $ml={20}>
        <Ic s={19}><path d="M4 3h12v11H4zM3 17h14M7 11h6" /></Ic>
      </Slot>
      <Sep $ml={15} $h={20} />
      <ZoomText $ml={19}>100%</ZoomText>
      <Slot $w={8} $ml={15}><Chev /></Slot>
      <Slot $w={16} $ml={20}><Minus size={17} strokeWidth={2.4} color="#333" /></Slot>
      <Slider>
        <SliderFill style={{ width: `${(66 / 133) * 100}%` }} />
        <SliderKnob style={{ left: `${(62 / 133) * 100}%` }} />
      </Slider>
      <Slot $w={16} $ml={17}><Plus size={17} strokeWidth={2.4} color="#333" /></Slot>
      <Slot $w={20} $ml={23}>
        <Ic s={19}><path d="M12 3h5v5M17 3l-3 3M8 17H3v-5M3 17l3-3" /></Ic>
      </Slot>
    </StatusBar>
  );
}

function SideBar() {
  return (
    <SidePanel>
      <SideDash />
      <SideItem>
        <Ic s={22} c="#333"><path d="M3 2.500L17 8l-5.500 2.500L16.500 16l-2 2-5-5.500L7 18z" /></Ic>
      </SideItem>
      <SideItem>
        <Ic s={22} c="#aaa"><path d="M1 6h6M11 6h8M1 14h10M15 14h4" /><circle cx="9" cy="6" r="2.300" /><circle cx="13" cy="14" r="2.300" /></Ic>
      </SideItem>
      <SideItem>
        <Ic s={22} c="#aaa"><path d="M1 2v1M1 6v12M5 2h14M16 6v7a2 2 0 0 1-2 2H5M14 8l2-2 2 2M7 13l-2 2 2 2" /></Ic>
      </SideItem>
      <SideItem>
        <Ic s={22} c="#444"><path d="M16 3H6a3 3 0 0 0-3 3v2a2 2 0 0 0 2 2v7h3M17 5a2 2 0 0 1 1 2" /><path d="M11 17c-1-3 0-6 2-7 1 3 0 6-2 7zM14 17c0-3 2-5 5-5-1 3-3 5-5 5z" /></Ic>
      </SideItem>
      <SideItem>
        <Ic s={22} c="#444"><path d="M3 13.500L7 17.500 17 8l-4-4zM10 7l3.500 3.500M15 1l1 2 2 1-2 1-1 2-1-2-2-1 2-1zM4 6l.7 1.300L6 8l-1.300.7L4 10l-.7-1.300L2 8l1.300-.7z" /></Ic>
      </SideItem>
      <SideItem>
        <Ic s={22} c="#444"><path d="M10 5L3 2v14l7 3 1-.4M10 5l8-3v8M10 5v8" /><circle cx="14.500" cy="14" r="3" /><path d="M17 16.500l2 2" /></Ic>
      </SideItem>
      <SideItem>
        <CircleHelp size={22} strokeWidth={1.2} color="#444" />
      </SideItem>
      <SideItem>
        <Ic s={22} c="#444" w={1.3}><circle cx="4" cy="10" r="1.700" /><circle cx="10" cy="10" r="1.700" /><circle cx="16" cy="10" r="1.700" /></Ic>
      </SideItem>
    </SidePanel>
  );
}

export default function App() {
  return (
    <Page>
      <GlobalStyle />
      <MenuBar />
      <RibbonBar />
      <Main>
        <LeftPane>
          <FormulaBar />
          <SheetArea />
          <TabsRow />
        </LeftPane>
        <SideBar />
      </Main>
      <BottomBar />
    </Page>
  );
}
